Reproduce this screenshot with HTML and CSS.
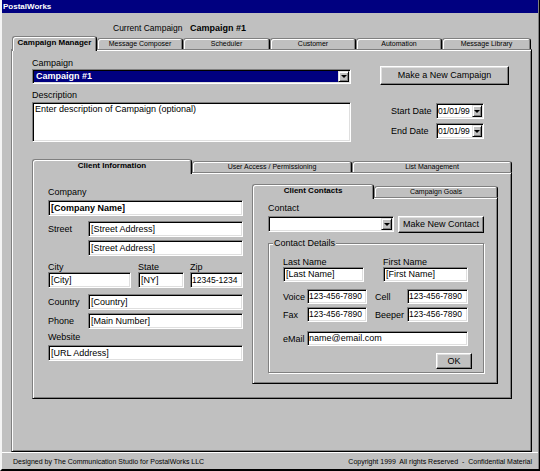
FILE: index.html
```html
<!DOCTYPE html>
<html lang="en">
<head>
    <meta charset="UTF-8">
    <meta name="viewport" content="width=device-width, initial-scale=1.0">
    <title>PostalWorks</title>
    <link rel="stylesheet" href="styles.css">
</head>
<body>
    <div class="window">
        <div class="titlebar">PostalWorks</div>

        <div class="current">
            <span class="current-label">Current Campaign</span>
            <span class="current-name">Campaign #1</span>
        </div>

        <!-- Main tabs -->
        <div class="tabs main-tabs">
            <div class="tab active">Campaign Manager</div>
            <div class="tab">Message Composer</div>
            <div class="tab">Scheduler</div>
            <div class="tab">Customer</div>
            <div class="tab">Automation</div>
            <div class="tab">Message Library</div>
        </div>

        <div class="panel main-panel">
            <div class="top-section">
                <div class="campaign-col">
                    <div class="label">Campaign</div>
                    <div class="field combo selected">
                        <span class="combo-text">Campaign #1</span>
                        <span class="drop"></span>
                    </div>
                    <div class="label desc-label">Description</div>
                    <div class="field area">Enter description of Campaign (optional)</div>
                </div>

                <div class="side-col">
                    <div class="btn new-campaign">Make a New Campaign</div>
                    <div class="date-row start-row">
                        <span class="date-label">Start Date</span>
                        <div class="field combo date">
                            <span class="combo-text">01/01/99</span>
                            <span class="drop"></span>
                        </div>
                    </div>
                    <div class="date-row end-row">
                        <span class="date-label">End Date</span>
                        <div class="field combo date">
                            <span class="combo-text">01/01/99</span>
                            <span class="drop"></span>
                        </div>
                    </div>
                </div>
            </div>

            <!-- Sub tabs -->
            <div class="tabs sub-tabs">
                <div class="tab active">Client Information</div>
                <div class="tab">User Access / Permissioning</div>
                <div class="tab">List Management</div>
            </div>

            <div class="panel sub-panel">
                <div class="client-info">
                    <div class="label">Company</div>
                    <div class="field company">[Company Name]</div>

                    <div class="row street-row">
                        <span class="row-label">Street</span>
                        <div class="field wide">[Street Address]</div>
                    </div>
                    <div class="row street2-row">
                        <div class="field wide">[Street Address]</div>
                    </div>

                    <div class="csz">
                        <div class="csz-col city">
                            <div class="small-label">City</div>
                            <div class="field">[City]</div>
                        </div>
                        <div class="csz-col state">
                            <div class="small-label">State</div>
                            <div class="field">[NY]</div>
                        </div>
                        <div class="csz-col zip">
                            <div class="small-label">Zip</div>
                            <div class="field">12345-1234</div>
                        </div>
                    </div>

                    <div class="row country-row">
                        <span class="row-label">Country</span>
                        <div class="field wide">[Country]</div>
                    </div>
                    <div class="row phone-main-row">
                        <span class="row-label">Phone</span>
                        <div class="field wide">[Main Number]</div>
                    </div>

                    <div class="label website-label">Website</div>
                    <div class="field">[URL Address]</div>
                </div>

                <div class="contacts">
                    <div class="tabs contact-tabs">
                        <div class="tab active">Client Contacts</div>
                        <div class="tab">Campaign Goals</div>
                    </div>

                    <div class="panel contact-panel">
                        <div class="label">Contact</div>
                        <div class="contact-row">
                            <div class="field combo contact-combo">
                                <span class="combo-text"></span>
                                <span class="drop"></span>
                            </div>
                            <div class="btn new-contact">Make New Contact</div>
                        </div>

                        <div class="groupbox">
                            <span class="legend">Contact Details</span>

                            <div class="names">
                                <div class="name-col last-name">
                                    <div class="small-label">Last Name</div>
                                    <div class="field">[Last Name]</div>
                                </div>
                                <div class="name-col first-name">
                                    <div class="small-label">First Name</div>
                                    <div class="field">[First Name]</div>
                                </div>
                            </div>

                            <div class="ph-row voice-row">
                                <span class="ph-label">Voice</span>
                                <div class="field ph">123-456-7890</div>
                                <span class="ph-label second">Cell</span>
                                <div class="field ph second-field">123-456-7890</div>
                            </div>
                            <div class="ph-row fax-row">
                                <span class="ph-label">Fax</span>
                                <div class="field ph">123-456-7890</div>
                                <span class="ph-label second">Beeper</span>
                                <div class="field ph second-field">123-456-7890</div>
                            </div>
                            <div class="ph-row email-row">
                                <span class="ph-label">eMail</span>
                                <div class="field email-field">name@email.com</div>
                            </div>

                            <div class="ok-row">
                                <div class="btn ok">OK</div>
                            </div>
                        </div>
                    </div>
                </div>
            </div>
        </div>

        <div class="statusbar">
            <span>Designed by The Communication Studio for PostalWorks LLC</span>
            <span class="copyright">Copyright 1999  All rights Reserved  -  Confidential Material</span>
        </div>
    </div>
</body>
</html>
```

FILE: styles.css
```css
* {
    margin: 0;
    padding: 0;
    box-sizing: border-box;
}

body {
    background: #c0c0c0;
    font-family: 'Liberation Sans', Arial, sans-serif;
    font-size: 9px;
    color: #000;
}

.window {
    width: 540px;
    height: 471px;
    display: flex;
    flex-direction: column;
    background: #c0c0c0;
    border-left: 2px solid #f4f4f4;
    border-right: 1px solid #000;
    border-bottom: 2px solid #000;
    padding-right: 1px;
    box-shadow: inset -1px 0 0 #808080;
    overflow: hidden;
}

.titlebar {
    height: 13px;
    flex: none;
    background: #000080;
    color: #fff;
    font-size: 8px;
    font-weight: bold;
    line-height: 13px;
    padding-left: 1px;
}

.current {
    height: 23px;
    flex: none;
    display: flex;
    align-items: flex-end;
    padding: 0 0 2px 111px;
    line-height: 11px;
}

.current-label {
    font-size: 8.5px;
    width: 77px;
}

.current-name {
    font-weight: bold;
}

/* Tabs */
.tabs {
    display: flex;
    align-items: flex-end;
    height: 13px;
    flex: none;
}

.tab {
    height: 11px;
    font-size: 7px;
    line-height: 9px;
    text-align: center;
    white-space: nowrap;
    overflow: hidden;
    background: #c0c0c0;
    border: 1px solid #808080;
    border-right-color: #000;
    border-bottom: none;
    border-radius: 3px 3px 0 0;
    box-shadow: inset 1px 1px 0 #fff, inset -1px 0 0 #808080;
}

.tab.active {
    height: 15px;
    margin-bottom: -2px;
    position: relative;
    z-index: 1;
    font-size: 8px;
    font-weight: bold;
    line-height: 12px;
}

.main-tabs {
    margin-left: 10px;
}

.main-tabs .tab { width: 86px; }
.main-tabs .tab:nth-child(1) { width: 85px; }
.main-tabs .tab:nth-child(3) { width: 87px; }
.main-tabs .tab:nth-child(6) { width: 89px; }

.sub-tabs .tab { width: 160px; }

.contact-tabs .tab { width: 124px; }
.contact-tabs .tab.active { width: 122px; }

/* Panels */
.panel {
    border: 1px solid;
    border-color: #808080 #000 #000 #808080;
    box-shadow: inset 1px 1px 0 #fff, inset -1px -1px 0 #808080;
}

.main-panel {
    width: 521px;
    height: 403px;
    flex: none;
    margin-left: 9px;
    padding: 8px 0 0 20px;
}

.top-section {
    display: flex;
    align-items: flex-start;
}

.campaign-col {
    width: 319px;
}

.side-col {
    width: 129px;
    margin-left: 29px;
}

.label {
    line-height: 11px;
    white-space: nowrap;
}

.small-label {
    line-height: 10px;
    white-space: nowrap;
}

.desc-label {
    margin-top: 6px;
    margin-bottom: 1px;
}

/* Fields */
.field {
    height: 16px;
    background: #fff;
    border: 1px solid;
    border-color: #808080 #fff #fff #808080;
    box-shadow: inset 1px 1px 0 #000, inset -1px -1px 0 #dfdfdf;
    padding: 0 2px;
    line-height: 14px;
    white-space: nowrap;
    overflow: hidden;
}

.combo {
    display: flex;
    padding: 1px;
}

.combo-text {
    flex: 1;
    padding-left: 1px;
    overflow: hidden;
}

.combo.selected {
    height: 15px;
}

.combo.selected .combo-text {
    background: #000080;
    color: #fff;
    font-weight: bold;
    line-height: 11px;
    padding-left: 2px;
}

.drop {
    width: 11px;
    flex: none;
    display: flex;
    align-items: center;
    justify-content: center;
    background: #c0c0c0;
    border: 1px solid;
    border-color: #dfdfdf #000 #000 #dfdfdf;
    box-shadow: inset 1px 1px 0 #fff, inset -1px -1px 0 #808080;
}

.drop::after {
    content: "";
    border-left: 3px solid transparent;
    border-right: 3px solid transparent;
    border-top: 3px solid #000;
}

.area {
    height: 40px;
    line-height: 11px;
    padding: 1px 2px;
}

/* Buttons */
.btn {
    background: #c0c0c0;
    border: 1px solid;
    border-color: #fff #000 #000 #fff;
    box-shadow: inset -1px -1px 0 #808080, inset 1px 1px 0 #dfdfdf;
    text-align: center;
    white-space: nowrap;
}

.new-campaign {
    margin-top: 8px;
    height: 19px;
    line-height: 17px;
}

.date-row {
    display: flex;
    align-items: center;
    padding-left: 11px;
}

.start-row { margin-top: 18px; }
.end-row { margin-top: 4px; }

.date-label {
    width: 45px;
}

.date {
    width: 48px;
}

.date .combo-text {
    font-size: 8.5px;
    line-height: 12px;
    padding-left: 0;
    letter-spacing: -0.2px;
}

.date .drop {
    width: 10px;
}

/* Client information */
.sub-tabs {
    margin-top: 17px;
}

.sub-panel {
    width: 480px;
    height: 227px;
    display: flex;
    align-items: flex-start;
    padding: 11px 0 0 15px;
}

.client-info {
    width: 195px;
    margin-top: 3px;
}

.client-info .label {
    margin-bottom: 2px;
}

.company {
    font-weight: bold;
}

.row {
    display: flex;
    align-items: center;
}

.row-label {
    width: 40px;
}

.wide {
    width: 155px;
}

.street-row { margin-top: 5px; }

.street2-row {
    margin-top: 3px;
    padding-left: 40px;
}

.csz {
    display: flex;
    margin-top: 6px;
}

.city { width: 83px; }
.state { width: 46px; margin-left: 7px; }
.zip { width: 53px; margin-left: 6px; }

.zip .field {
    font-size: 8.5px;
    padding: 0 1px;
}

.country-row { margin-top: 6px; }
.phone-main-row { margin-top: 3px; }

.client-info .website-label {
    margin-top: 3px;
}

/* Client contacts */
.contacts {
    width: 246px;
    margin-left: 9px;
}

.contact-panel {
    height: 187px;
    padding: 5px 0 0 15px;
}

.contact-panel > .label {
    margin-bottom: 2px;
}

.contact-row {
    display: flex;
    align-items: flex-start;
}

.contact-combo {
    width: 126px;
}

.new-contact {
    width: 86px;
    height: 17px;
    margin-left: 4px;
    line-height: 15px;
}

.groupbox {
    position: relative;
    width: 216px;
    height: 130px;
    margin-top: 10px;
    padding: 13px 0 0 14px;
    border: 1px solid #808080;
    box-shadow: inset 1px 1px 0 #fff, 1px 1px 0 #fff;
}

.legend {
    position: absolute;
    top: -6px;
    left: 4px;
    padding: 0 1px;
    line-height: 11px;
    background: #c0c0c0;
}

.names {
    display: flex;
    gap: 19px;
}

.last-name { width: 81px; }
.first-name { width: 85px; }

.names .field {
    height: 15px;
    line-height: 13px;
}

.ph-row {
    display: flex;
    align-items: center;
}

.voice-row { margin-top: 7px; }
.fax-row { margin-top: 3px; }
.email-row { margin-top: 9px; }

.ph-label {
    width: 24px;
}

.ph-label.second {
    width: 32px;
    margin-left: 8px;
}

.ph-row .field {
    height: 15px;
    line-height: 13px;
    padding: 0 1px;
}

.ph {
    width: 60px;
    font-size: 8.5px;
}

.ph.second-field {
    width: 61px;
}

.email-field {
    width: 161px;
}

.ok-row {
    margin-top: 7px;
    padding-left: 153px;
}

.ok {
    width: 36px;
    height: 16px;
    line-height: 14px;
}

/* Status bar */
.statusbar {
    height: 17px;
    flex: none;
    display: flex;
    justify-content: space-between;
    align-items: center;
    border-top: 1px solid #fff;
    padding: 0 6px 0 11px;
    font-size: 7px;
    white-space: pre;
}
```
